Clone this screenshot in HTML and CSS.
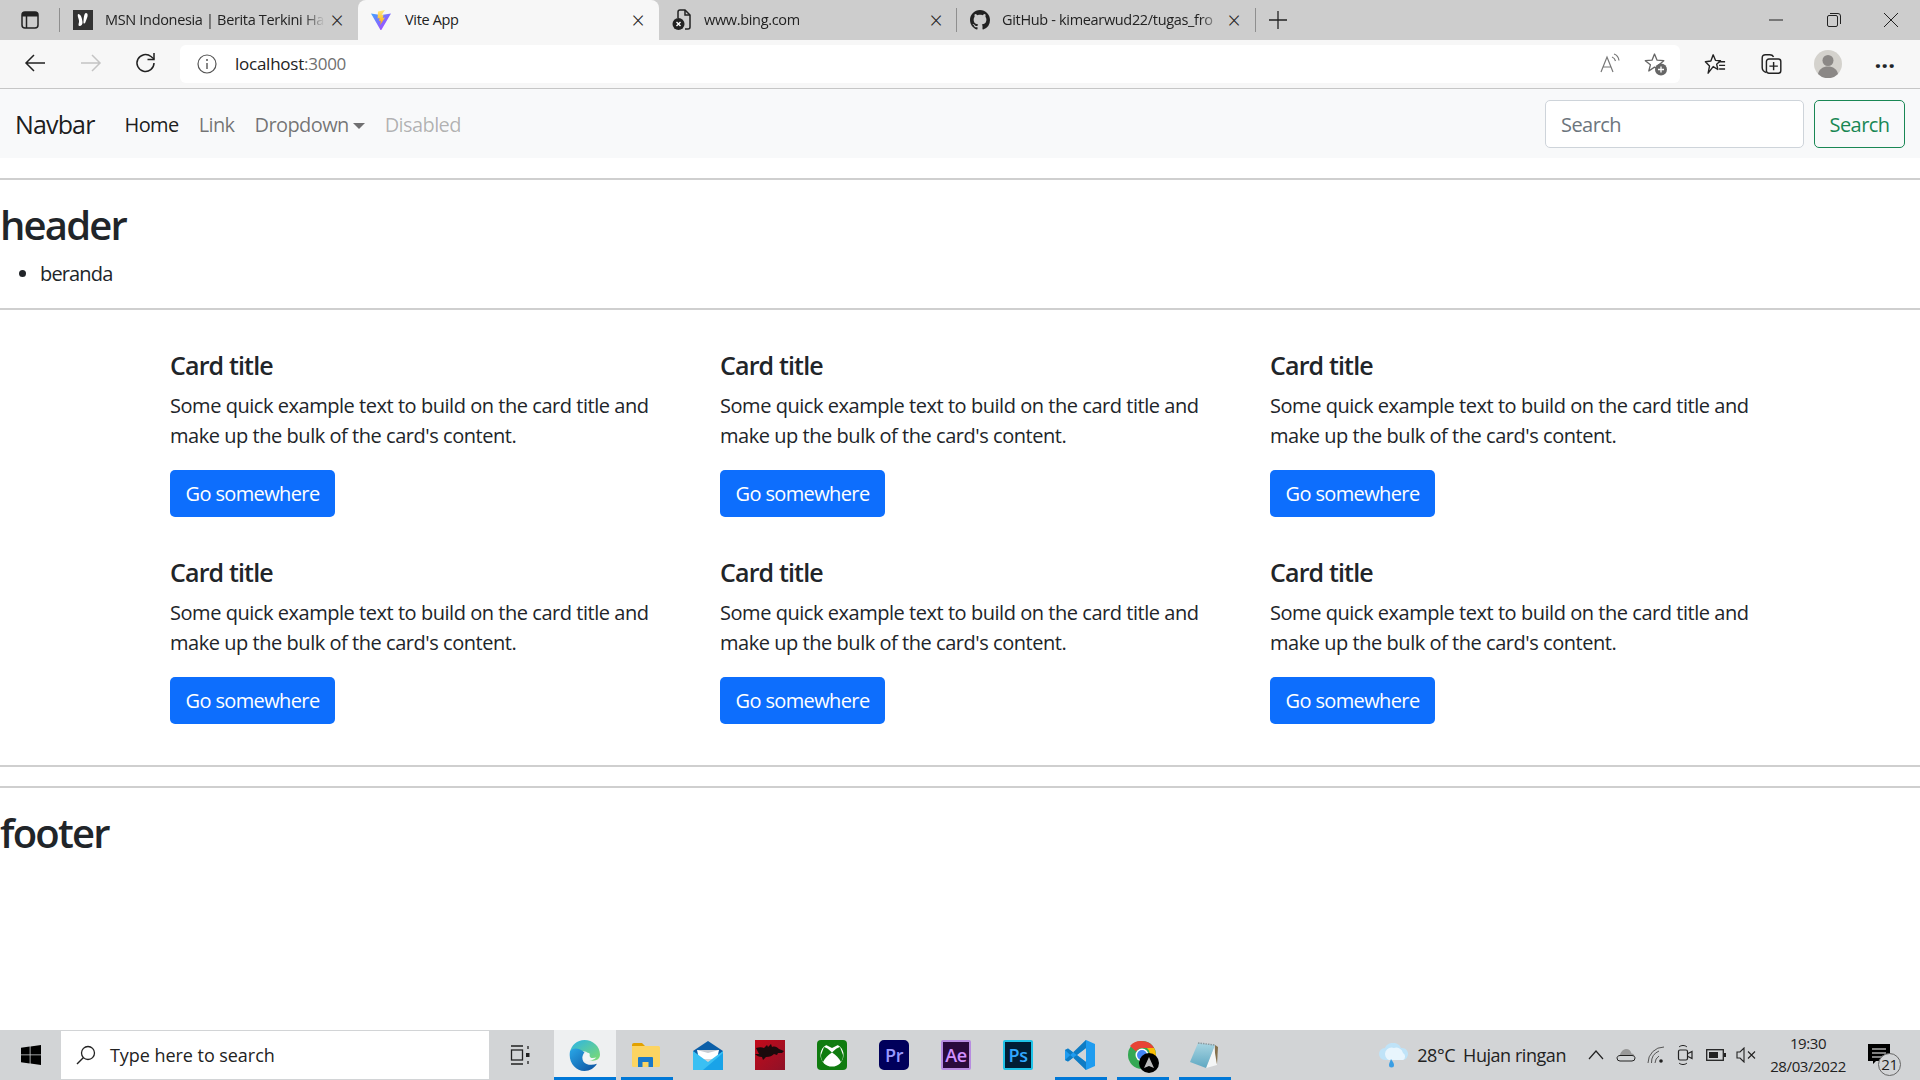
FILE: index.html
```html
<!DOCTYPE html>
<html lang="en">
<head>
    <meta charset="UTF-8">
    <title>Vite App</title>
    <link rel="stylesheet" href="styles.css">
</head>
<body>
<div class="window">
    <!-- tab strip -->
    <div class="tabstrip">
        <div class="side-btn">
            <svg width="18" height="18" viewBox="0 0 18 18"><rect x="1" y="1" width="16" height="16" rx="3" fill="none" stroke="#222" stroke-width="1.5"/><path d="M1 5.5V4a3 3 0 0 1 3-3h10a3 3 0 0 1 3 3v1.5Z" fill="#222"/><path d="M5.5 5v12" stroke="#222" stroke-width="1.5"/></svg>
        </div>
        <div class="tab tab-sep">
            <svg class="tab-icon" width="20" height="20" viewBox="0 0 20 20"><rect width="20" height="20" fill="#333"/><path d="M5 4c3 0 4 4 4.500 8 .3 2-1 4-3 4-1.500 0-1-2-.5-4C6.500 9 4 7 5 4ZM13 3c2 0 2 3 1 5l-1.500 4c-.5 1.500-1.500 2-2 1 0-4 .5-10 2.500-10Z" fill="#fff"/></svg>
            <span class="tab-title">MSN Indonesia | Berita Terkini Ha</span>
            <span class="tab-close">&times;</span>
        </div>
        <div class="tab tab-active">
            <svg class="tab-icon" width="20" height="20" viewBox="0 0 20 20"><defs><linearGradient id="viteA" x1="0" y1="0" x2="1" y2="1"><stop offset="0" stop-color="#41a5ff"/><stop offset="1" stop-color="#bd34fe"/></linearGradient><linearGradient id="viteB" x1="0" y1="0" x2="0" y2="1"><stop offset="0" stop-color="#ffea83"/><stop offset="1" stop-color="#ffa800"/></linearGradient></defs><path d="M0 3.500 9.500 5l1-.1L20 3.500 10.300 20a.5.5 0 0 1-.8 0Z" fill="url(#viteA)"/><path d="M14 0 7 1.400 6.600 8.500l2-.4-.5 3 1.800-.4-.8 4.300L14 7.500l-2.200.4.700-3.200-1.900.3Z" fill="url(#viteB)"/></svg>
            <span class="tab-title">Vite App</span>
            <span class="tab-close">&times;</span>
        </div>
        <div class="tab tab-sep">
            <svg class="tab-icon" width="20" height="22" viewBox="0 0 20 22"><path d="M6 9V3a2 2 0 0 1 2-2h5l5 5v12a2 2 0 0 1-2 2h-3" fill="none" stroke="#222" stroke-width="1.500"/><path d="M13 1v5h5" fill="none" stroke="#222" stroke-width="1.500"/><circle cx="6.500" cy="15" r="6" fill="#222"/><path d="m4.500 13 4 4m0-4-4 4" stroke="#fff" stroke-width="1.400"/></svg>
            <span class="tab-title">www.bing.com</span>
            <span class="tab-close">&times;</span>
        </div>
        <div class="tab tab-sep">
            <svg class="tab-icon" width="20" height="20" viewBox="0 0 16 16"><path fill="#222" d="M8 0C3.580 0 0 3.580 0 8c0 3.540 2.290 6.530 5.470 7.590.4.070.55-.17.55-.38 0-.19-.01-.82-.01-1.490-2.010.37-2.530-.49-2.690-.94-.09-.23-.48-.94-.82-1.130-.28-.15-.68-.52-.01-.53.630-.01 1.080.58 1.230.82.720 1.210 1.870.87 2.330.66.070-.52.280-.87.510-1.070-1.780-.2-3.640-.89-3.640-3.950 0-.87.310-1.590.820-2.150-.08-.2-.36-1.020.08-2.120 0 0 .67-.21 2.200.82.640-.18 1.320-.27 2-.27s1.360.09 2 .27c1.530-1.040 2.200-.82 2.200-.82.440 1.100.16 1.920.08 2.120.51.560.82 1.270.82 2.150 0 3.070-1.870 3.750-3.650 3.950.29.250.54.730.54 1.480 0 1.070-.01 1.930-.01 2.200 0 .21.150.46.550.38A8.010 8.010 0 0 0 16 8c0-4.420-3.580-8-8-8Z"/></svg>
            <span class="tab-title">GitHub - kimearwud22/tugas_fro</span>
            <span class="tab-close">&times;</span>
        </div>
        <div class="new-tab">
            <svg width="18" height="18" viewBox="0 0 18 18"><path d="M9 0v18M0 9h18" stroke="#222" stroke-width="1.300"/></svg>
        </div>
        <div class="win-controls">
            <div class="win-btn"><svg width="14" height="14" viewBox="0 0 14 14"><path d="M0 7h14" stroke="#222"/></svg></div>
            <div class="win-btn"><svg width="14" height="14" viewBox="0 0 14 14"><rect x=".5" y="2.500" width="10" height="11" rx="1.500" fill="none" stroke="#222"/><path d="M3 .5h8a2.500 2.500 0 0 1 2.500 2.500v8" fill="none" stroke="#222"/></svg></div>
            <div class="win-btn"><svg width="14" height="14" viewBox="0 0 14 14"><path d="m0 0 14 14M14 0 0 14" stroke="#222"/></svg></div>
        </div>
    </div>

    <!-- address bar row -->
    <div class="toolbar">
        <div class="tool-btn tool-nav">
            <svg width="22" height="20" viewBox="0 0 22 20"><path d="M21 10H2M10 2l-8 8 8 8" fill="none" stroke="#222" stroke-width="1.500"/></svg>
        </div>
        <div class="tool-btn tool-nav">
            <svg width="22" height="20" viewBox="0 0 22 20"><path d="M1 10h19M12 2l8 8-8 8" fill="none" stroke="#c4c4c4" stroke-width="1.500"/></svg>
        </div>
        <div class="tool-btn tool-nav">
            <svg width="22" height="22" viewBox="0 0 22 22"><path d="M19 11a8.500 8.500 0 1 1-3-6.500L19 7" fill="none" stroke="#222" stroke-width="1.500"/><path d="M19 1v6.500h-6.500" fill="none" stroke="#222" stroke-width="1.500"/></svg>
        </div>
        <div class="address">
            <svg class="addr-info" width="20" height="20" viewBox="0 0 20 20"><circle cx="10" cy="10" r="9" fill="none" stroke="#555" stroke-width="1.200"/><path d="M10 9v6" stroke="#555" stroke-width="1.400"/><circle cx="10" cy="6" r="1" fill="#555"/></svg>
            <span class="addr-text">localhost<span class="addr-port">:3000</span></span>
            <svg class="addr-read" width="22" height="22" viewBox="0 0 22 22"><path d="m1 19 6-15 6 15M3.500 14h7" fill="none" stroke="#777" stroke-width="1.200"/><path d="M12 4c2 .7 3 2 3.500 4M14 1c2.500.8 4.500 3 5 6.500" fill="none" stroke="#777" stroke-width="1.200"/></svg>
            <svg class="addr-star" width="24" height="24" viewBox="0 0 24 24"><path d="m10.500 2 2.600 6.200 6.700.5-5.100 4.400 1.500 5.500-5.700-3.500L4.800 19l1.600-6.200L1.300 8.700l6.700-.5Z" fill="none" stroke="#666" stroke-width="1.300" stroke-linejoin="round"/><circle cx="17" cy="17.500" r="6" fill="#666"/><path d="M17 14.500v6M14 17.500h6" stroke="#fff" stroke-width="1.300"/></svg>
        </div>
        <div class="tool-btn tool-right">
            <svg width="22" height="22" viewBox="0 0 24 24"><path d="m10 2 2.500 6 5.500.4-4.200 3.800 1.300 5.800-5.100-3.200L4.500 22l1.500-7.800L1.500 9.500l6-.8Z" fill="none" stroke="#222" stroke-width="1.500" stroke-linejoin="round"/><path d="M16 9.500h7M16.500 13.500h6.500M16.500 17.500h6.500" stroke="#222" stroke-width="1.500"/></svg>
        </div>
        <div class="tool-btn tool-right">
            <svg width="21" height="22" viewBox="0 0 24 26"><path d="M6 23C3 22 1 20 1 17V6c0-2.500 1.500-4 4-4h5c2 0 3.500.8 4.500 2.500" fill="none" stroke="#222" stroke-width="1.700"/><rect x="6" y="7" width="17" height="17" rx="3" fill="#f7f7f7" stroke="#222" stroke-width="1.700"/><path d="M14.500 10.500v10M9.500 15.500h10" stroke="#222" stroke-width="1.700"/></svg>
        </div>
        <div class="tool-btn tool-right">
            <svg width="28" height="28" viewBox="0 0 28 28"><circle cx="14" cy="14" r="14" fill="#d4d2cd"/><circle cx="14" cy="10.500" r="5.500" fill="#8b8886"/><path d="M4 24c1-5 5-7.500 10-7.500s9 2.500 10 7.500a14 14 0 0 1-20 0Z" fill="#8b8886"/></svg>
        </div>
        <div class="tool-btn tool-right tool-dots">&middot;&middot;&middot;</div>
    </div>

    <!-- page content -->
    <div class="page">
        <nav class="navbar">
            <a class="brand">Navbar</a>
            <a class="nav-link nav-current">Home</a>
            <a class="nav-link">Link</a>
            <a class="nav-link">Dropdown<span class="caret"></span></a>
            <a class="nav-link nav-disabled">Disabled</a>
            <form class="nav-search">
                <input class="search-input" type="text" placeholder="Search">
                <button class="search-btn" type="button">Search</button>
            </form>
        </nav>
        <hr>
        <h1>header</h1>
        <ul class="menu">
            <li>beranda</li>
        </ul>
        <hr class="hr-up">
        <div class="card-grid">
            <div class="card"><h5>Card title</h5><p>Some quick example text to build on the card title and make up the bulk of the card's content.</p><a class="btn-primary">Go somewhere</a></div>
            <div class="card"><h5>Card title</h5><p>Some quick example text to build on the card title and make up the bulk of the card's content.</p><a class="btn-primary">Go somewhere</a></div>
            <div class="card"><h5>Card title</h5><p>Some quick example text to build on the card title and make up the bulk of the card's content.</p><a class="btn-primary">Go somewhere</a></div>
            <div class="card"><h5>Card title</h5><p>Some quick example text to build on the card title and make up the bulk of the card's content.</p><a class="btn-primary">Go somewhere</a></div>
            <div class="card"><h5>Card title</h5><p>Some quick example text to build on the card title and make up the bulk of the card's content.</p><a class="btn-primary">Go somewhere</a></div>
            <div class="card"><h5>Card title</h5><p>Some quick example text to build on the card title and make up the bulk of the card's content.</p><a class="btn-primary">Go somewhere</a></div>
        </div>
        <hr class="hr-tight">
        <hr class="hr-up">
        <h1>footer</h1>
    </div>

    <!-- windows taskbar -->
    <div class="taskbar">
        <div class="start">
            <svg width="20" height="20" viewBox="0 0 20 20"><path d="M0 2.800 8.700 1.500v8H0ZM9.500 1.400 20 0v9.500H9.500ZM0 10.300h8.700v8.200L0 17.200ZM9.500 10.300H20V20L9.500 18.600Z" fill="#000"/></svg>
        </div>
        <div class="task-search">
            <svg width="20" height="20" viewBox="0 0 20 20"><circle cx="12" cy="8" r="6.500" fill="none" stroke="#222" stroke-width="1.300"/><path d="M7.500 12.500 1 19" stroke="#222" stroke-width="1.500"/></svg>
            <span class="task-search-text">Type here to search</span>
        </div>
        <div class="task-view">
            <svg width="20" height="20" viewBox="0 0 20 20"><path d="M1 1h12M1 19h12" stroke="#222" stroke-width="1.300"/><rect x="1.500" y="5" width="11" height="10" fill="none" stroke="#222" stroke-width="1.300"/><path d="M18 1v3M18 16v3" stroke="#222" stroke-width="1.300"/><rect x="16" y="8" width="3.500" height="4" fill="#222"/></svg>
        </div>
        <div class="app app-active app-open">
            <svg width="31" height="31" viewBox="0 0 30 30"><defs><linearGradient id="edgeA" x1="0" y1="0" x2="1" y2="1"><stop offset="0" stop-color="#2bb3e8"/><stop offset="1" stop-color="#7edc6e"/></linearGradient><linearGradient id="edgeB" x1="0" y1="0" x2="1" y2="1"><stop offset="0" stop-color="#2aa8e8"/><stop offset="1" stop-color="#0b4f9e"/></linearGradient></defs><path d="M1 12C2 5 8 0 15 0c8 0 15 6 15 14 0 4-3 6-7 6-3 0-5-1-4-3 1-3-1-6-5-6-5 0-9 3-13 1Z" fill="url(#edgeA)"/><path d="M1 11C-1 21 6 30 15 30c5 0 10-3 12-7-5 2-11 1-13-2-2-3-1-7 1-9C10 7 3 7 1 11Z" fill="url(#edgeB)"/><path d="M14 19c-1.500-3 .5-6 3.500-6.500 2-.3 3 .8 2.500 2-.3 2 1 3 3 3l3.500-.5c-3.500 3.500-10 4-12.500 2Z" fill="#f2f5f6"/></svg>
        </div>
        <div class="app app-open">
            <svg width="28" height="24" viewBox="0 0 28 24"><path d="M0 2a2 2 0 0 1 2-2h8l3 3H0Z" fill="#e2a100"/><path d="M0 3h26.500A1.500 1.500 0 0 1 28 4.500v18a1.500 1.500 0 0 1-1.500 1.500h-25A1.500 1.500 0 0 1 0 22.500Z" fill="#fcd462"/><path d="M6 24v-9a1 1 0 0 1 1-1h13a1 1 0 0 1 1 1v9h-4.500v-5h-6v5Z" fill="#1a79c9"/></svg>
        </div>
        <div class="app">
            <svg width="30" height="29" viewBox="0 0 30 29"><path d="M0 10 15 0l15 10v6H0Z" fill="#0c5fa8"/><path d="M4 9h22l-2 9H6Z" fill="#fff"/><path d="M4 9h22l-11 3Z" fill="#c8ccd2"/><path d="M0 10l15 11 15-11v19H0Z" fill="#3ac0f3"/><path d="M30 29H10L30 12Z" fill="#19a3e8"/></svg>
        </div>
        <div class="app">
            <svg width="30" height="30" viewBox="0 0 30 30"><defs><linearGradient id="dragonBg" x1="0" y1="0" x2="1" y2="1"><stop offset="0" stop-color="#c30a1a"/><stop offset="1" stop-color="#8f1228"/></linearGradient></defs><rect width="30" height="30" fill="url(#dragonBg)"/><path d="M1 8c3-1 6-1 8 0l3-3 1 2 3-3 1 3c3-1 5 0 7 2l5 2-2 2-4 0-1 2-3-1c-2 2-4 3-8 3l-3 3-1-3c-3 0-5-1-7-3l4 0C3 12 2 10 1 8Z" fill="#1b0a0c"/></svg>
        </div>
        <div class="app">
            <svg width="30" height="30" viewBox="0 0 30 30"><rect width="30" height="30" rx="4" fill="#107c10"/><circle cx="15" cy="15" r="11.500" fill="#fff"/><path d="M15 12.500C12 9.500 9.500 7.500 7 7l-3 8c0 3 .5 5 2 7 2-4 5-7 9-9.500ZM15 12.500c3-3 5.500-5 8-5.500l3 8c0 3-.5 5-2 7-2-4-5-7-9-9.500ZM8 4.500C10 3.500 12.500 3 15 3s5 .5 7 1.500L15 8Z" fill="#107c10"/></svg>
        </div>
        <div class="app"><span class="adobe adobe-pr">Pr</span></div>
        <div class="app"><span class="adobe adobe-ae">Ae</span></div>
        <div class="app"><span class="adobe adobe-ps">Ps</span></div>
        <div class="app app-open">
            <svg width="30" height="30" viewBox="0 0 30 30"><path d="M21 0 9 13l-6-4.500L0 10v10l3 1.500L9 17l12 13 9-4V4Z" fill="#1f9cf0"/><path d="M21 8v14l-9-7Z" fill="#d2d4d6"/><path d="M3 8.500 21 22v8L0 10ZM3 21.500 21 8V0L0 20Z" fill="#0f7cc4"/></svg>
        </div>
        <div class="app app-open">
            <svg width="30" height="30" viewBox="0 0 30 30"><circle cx="15" cy="15" r="14" fill="#34a853"/><path d="M15 1a14 14 0 0 1 12.100 7H15a7 7 0 0 0-6 3.500L3 6a14 14 0 0 1 12-5Z" fill="#e84335"/><path d="M27.100 8A14 14 0 0 1 15 29l6-11a7 7 0 0 0-1-10Z" fill="#fbbc05"/><circle cx="15" cy="15" r="6.500" fill="#fff"/><circle cx="15" cy="15" r="5" fill="#4285f4"/></svg>
            <svg class="chrome-badge" width="20" height="20" viewBox="0 0 20 20"><circle cx="10" cy="10" r="10" fill="#000"/><path d="M10 4 15 15l-5-2-5 2Z" fill="#bbb"/></svg>
        </div>
        <div class="app app-open">
            <svg width="28" height="26" viewBox="0 0 28 26"><defs><linearGradient id="padBlue" x1="0" y1="0" x2="0" y2="1"><stop offset="0" stop-color="#a8d5e2"/><stop offset="1" stop-color="#5fa8c2"/></linearGradient></defs><path d="M25 3l3 2-1 17-2-1Z" fill="#86714c"/><path d="M24 5l3 18-11 3Z" fill="#f4f6f6"/><path d="M8 1l17 2-9 23L0 20Z" fill="url(#padBlue)"/><path d="M8 1l17 2" stroke="#8b9aa0" stroke-width="1.500" stroke-dasharray="1.500 1"/></svg>
        </div>

        <div class="tray">
            <svg class="tray-weather" width="34" height="26" viewBox="0 0 34 26"><path d="M8 18a6 6 0 0 1 0-12c1-3 4-5 8-5s7 2 8 5a6 6 0 0 1 2 12Z" fill="#bfe3f8"/><path d="M17 6a7 7 0 0 1 9 5 4 4 0 0 1 0 7H12a6 6 0 0 1 5-12Z" fill="#e8f5fd"/><path d="M14 17c2 3 3 4.500 3 6a2.500 2.500 0 0 1-5 0c0-1.500 1-3 2-6Z" fill="#3a9ee4"/></svg>
            <span class="tray-temp">28°C</span>
            <span class="tray-cond">Hujan ringan</span>
            <div class="tray-icon"><svg width="16" height="10" viewBox="0 0 16 10"><path d="m1 9 7-8 7 8" fill="none" stroke="#222" stroke-width="1.200"/></svg></div>
            <div class="tray-icon"><svg width="20" height="14" viewBox="0 0 20 14"><path d="M4 10C3 5 7 1 10 1c3 0 5 2 5.500 4.500 2 .2 3 1.500 3.500 3.500Z" fill="#999"/><path d="M1 10a3 3 0 0 0 3 3h12a3 3 0 0 0 3-3c0-1-1-2.500-3-2.500H4c-2 0-3 1.500-3 2.500Z" fill="#d2d4d6" stroke="#222"/></svg></div>
            <div class="tray-icon"><svg width="18" height="18" viewBox="0 0 18 18"><path d="M1 17A16 16 0 0 1 17 1M4.500 17A12.500 12.500 0 0 1 12 5M8 17a9 9 0 0 1 4-7" fill="none" stroke="#555" stroke-width="1"/><circle cx="14" cy="15" r="1.800" fill="#222"/></svg></div>
            <div class="tray-icon"><svg width="18" height="22" viewBox="0 0 18 22"><rect x="1.500" y="6" width="9" height="10" rx="1.500" fill="none" stroke="#222" stroke-width="1.200"/><path d="m11 9.500 4-2v7l-4-2" fill="none" stroke="#222" stroke-width="1.200"/><path d="M2 3c2-2 6-2 8 0M2 19c2 2 6 2 8 0" fill="none" stroke="#222"/></svg></div>
            <div class="tray-icon"><svg width="20" height="12" viewBox="0 0 20 12"><rect x=".7" y=".7" width="16.600" height="10.600" fill="none" stroke="#222" stroke-width="1.300"/><rect x="3" y="3" width="9" height="6" fill="#222"/><rect x="18" y="4" width="2" height="4" fill="#222"/></svg></div>
            <div class="tray-icon"><svg width="20" height="16" viewBox="0 0 20 16"><path d="M1 5h3l4-4v14l-4-4H1Z" fill="none" stroke="#222" stroke-width="1.100"/><path d="m12 4.500 7 7m0-7-7 7" stroke="#222" stroke-width="1.100"/></svg></div>
            <div class="clock">
                <span>19:30</span>
                <span>28/03/2022</span>
            </div>
            <div class="notify">
                <svg width="22" height="20" viewBox="0 0 22 20"><path d="M0 0h22v17H8l-3 3v-3H0Z" fill="#000"/><path d="M4 5h14M4 9h14M4 13h14" stroke="#fff" stroke-width="1.200"/></svg>
                <span class="notify-count">21</span>
            </div>
        </div>
    </div>
</div>
</body>
</html>
```

FILE: styles.css
```css
* {
    box-sizing: border-box;
}
html, body {
    margin: 0;
    height: 100%;
    overflow: hidden;
}
body {
    font-family: "Open Sans", "Noto Sans", sans-serif;
    color: #212529;
    background: #fff;
}
.window {
    display: flex;
    flex-direction: column;
    height: 1080px;
}

/* tab strip */
.tabstrip {
    display: flex;
    align-items: stretch;
    height: 40px;
    background: #cdcdcd;
    flex: none;
}
.side-btn {
    width: 60px;
    display: flex;
    align-items: center;
    justify-content: center;
    padding-right: 1px;
}
.tab {
    width: 298px;
    display: flex;
    align-items: center;
    padding: 0 13px 0 13px;
    font-size: 14.500px;
    letter-spacing: -0.33px;
    color: #222;
    position: relative;
}
.tab-sep::before {
    content: "";
    position: absolute;
    left: -1px;
    top: 8px;
    bottom: 8px;
    width: 1px;
    background: #8f8f8f;
}
.tab-active {
    width: 301px;
    background: #f7f7f7;
    border-radius: 8px 8px 0 0;
}
.tab-active + .tab-sep::before {
    display: none;
}
.tab-icon {
    flex: none;
    margin-right: 12px;
}
.tab-active .tab-icon {
    margin-right: 14px;
}
.tab-title {
    flex: 1;
    padding-bottom: 2px;
    white-space: nowrap;
    overflow: hidden;
    -webkit-mask-image: linear-gradient(to right, #000 90%, transparent);
    mask-image: linear-gradient(to right, #000 90%, transparent);
}
.tab-active .tab-title {
    -webkit-mask-image: none;
    mask-image: none;
}
.tab-close {
    flex: none;
    width: 16px;
    margin-left: 4px;
    font-size: 23px;
    font-weight: 300;
    line-height: 1;
    text-align: center;
}
.new-tab {
    width: 44px;
    border-left: 1px solid #8f8f8f;
    margin: 8px 0;
    display: flex;
    align-items: center;
    justify-content: center;
}
.win-controls {
    display: flex;
    margin-left: auto;
}
.win-btn {
    width: 57.500px;
    display: flex;
    align-items: center;
    justify-content: center;
}

/* address bar row */
.toolbar {
    display: flex;
    align-items: center;
    height: 49px;
    flex: none;
    padding: 0 7px 0 8px;
    background: #f7f7f7;
    border-bottom: 1px solid #c6c6c6;
}
.tool-btn {
    display: flex;
    align-items: center;
    justify-content: center;
    flex: none;
}
.tool-nav {
    width: 55px;
    padding-bottom: 2px;
}
.tool-nav:first-child {
    padding-right: 2px;
}
.tool-right {
    width: 56.500px;
}
.tool-dots {
    font-size: 24px;
    font-weight: 700;
}
.address {
    width: 1500px;
    height: 38px;
    margin: 0 7px;
    flex: none;
    display: flex;
    align-items: center;
    background: #fff;
    border-radius: 6px;
    padding: 0 10px 0 17px;
}
.addr-text {
    margin-left: 18px;
    padding-bottom: 2px;
    font-size: 17px;
    letter-spacing: -0.25px;
    color: #222;
}
.addr-port {
    color: #6f6f6f;
}
.addr-read {
    margin-left: auto;
}
.addr-star {
    margin-left: 22px;
    margin-right: 2px;
}

/* page */
.page {
    flex: 1;
    min-height: 0;
    font-size: 20px;
    line-height: 30px;
    letter-spacing: -0.46px;
}
.navbar {
    display: flex;
    align-items: center;
    height: 69px;
    padding: 0 15px;
    background: #f8f9fa;
}
.navbar a {
    white-space: nowrap;
}
.brand {
    font-size: 25px;
    line-height: 38px;
    margin-right: 20px;
    color: rgba(0, 0, 0, 0.9);
    letter-spacing: -0.85px;
}
.nav-link {
    padding: 2px 10px 0;
    letter-spacing: -0.6px;
    color: rgba(0, 0, 0, 0.55);
}
.nav-current {
    color: rgba(0, 0, 0, 0.9);
}
.nav-disabled {
    color: rgba(0, 0, 0, 0.3);
}
.caret {
    display: inline-block;
    margin-left: 4px;
    vertical-align: 3px;
    border-top: 6px solid;
    border-left: 6px solid transparent;
    border-right: 6px solid transparent;
}
.nav-search {
    display: flex;
    margin: 0 0 0 auto;
}
.search-input,
.search-btn {
    height: 48px;
    font: inherit;
    letter-spacing: -0.55px;
    border-radius: 5px;
    background: #fff;
}
.search-input {
    width: 259px;
    padding: 2px 15px 0;
    border: 1px solid #ced4da;
    margin-right: 10px;
    color: #212529;
}
.search-input::placeholder {
    color: #6c757d;
    opacity: 1;
}
.search-btn {
    width: 91px;
    padding: 2px 0 0;
    border: 1px solid #198754;
    color: #198754;
    background: transparent;
}
hr {
    margin: 20px 0;
    border: 0;
    border-top: 2px solid #cfcfcf;
    height: 0;
}
.hr-up {
    margin-top: 19px;
}
.hr-tight {
    margin-bottom: 19px;
}
h1 {
    margin: 0 0 10px;
    padding-top: 1px;
    font-size: 40px;
    line-height: 48px;
    font-weight: 600;
    letter-spacing: -1.8px;
}
.menu {
    margin: 0;
    padding-left: 40px;
    letter-spacing: -0.85px;
}
.card-grid {
    display: grid;
    grid-template-columns: repeat(3, 550px);
    width: 1650px;
    margin: 0 auto 21px;
}
.card {
    margin: 0 15px;
    padding: 20px;
    height: 207px;
}
.card h5 {
    margin: 0 0 11px;
    font-size: 25px;
    line-height: 30px;
    font-weight: 600;
    letter-spacing: -0.85px;
}
.card p {
    margin: 0 0 19px;
}
.btn-primary {
    display: inline-block;
    width: 165px;
    height: 47px;
    line-height: 48px;
    border-radius: 5px;
    background: #0d6efd;
    color: #fff;
    text-align: center;
    letter-spacing: -0.62px;
}

/* taskbar */
.taskbar {
    display: flex;
    align-items: stretch;
    height: 50px;
    flex: none;
    background: #d2d4d6;
    font-size: 18px;
    letter-spacing: -0.45px;
    color: #222;
}
.start {
    width: 61px;
    display: flex;
    align-items: center;
    justify-content: center;
}
.task-search {
    width: 428px;
    margin: 1px 0;
    display: flex;
    align-items: center;
    gap: 14px;
    padding-left: 15px;
    background: #fff;
}
.task-search-text {
    letter-spacing: -0.05px;
}
.task-view {
    width: 65px;
    padding-right: 4px;
    display: flex;
    align-items: center;
    justify-content: center;
}
.app {
    width: 62px;
    padding-right: 2px;
    display: flex;
    align-items: center;
    justify-content: center;
    position: relative;
}
.app-active {
    background: #eef0f1;
}
.app-open::after {
    content: "";
    position: absolute;
    left: 5px;
    right: 5px;
    bottom: 0;
    height: 3px;
    background: #0078d7;
}
.app-active::after {
    left: 0;
    right: 0;
}
.adobe {
    width: 30px;
    height: 30px;
    display: flex;
    align-items: center;
    justify-content: center;
    border: 2px solid;
    border-radius: 2px;
    font-size: 18px;
    letter-spacing: -0.5px;
    font-weight: 600;
}
.adobe-pr {
    background: #00005b;
    color: #9999ff;
    border-color: #00005b;
    border-radius: 5px;
}
.adobe-ae {
    background: #2a0a3c;
    color: #d291ff;
    border-color: #b78ce0;
}
.adobe-ps {
    background: #001e36;
    color: #31a8ff;
    border-color: #1fc3e8;
}
.chrome-badge {
    position: absolute;
    left: 27px;
    top: 23px;
}
.tray {
    margin-left: auto;
    display: flex;
    align-items: center;
    padding-right: 5px;
}
.tray-weather {
    margin-right: 6px;
}
.tray-temp {
    margin-right: 8px;
}
.tray-cond {
    margin-right: 15px;
    white-space: nowrap;
}
.tray-icon {
    width: 30px;
    display: flex;
    align-items: center;
    justify-content: center;
}
.clock {
    width: 94px;
    display: flex;
    flex-direction: column;
    align-items: center;
    gap: 2px;
    font-size: 15px;
    line-height: 21px;
    letter-spacing: -0.4px;
}
.notify {
    width: 60px;
    height: 50px;
    position: relative;
    display: flex;
    padding: 14px 0 0 13px;
}
.notify-count {
    position: absolute;
    left: 23px;
    top: 23px;
    width: 23px;
    height: 23px;
    border-radius: 50%;
    border: 1px solid #666;
    background: #d2d4d6;
    font-size: 15px;
    line-height: 21px;
    text-align: center;
}
```
